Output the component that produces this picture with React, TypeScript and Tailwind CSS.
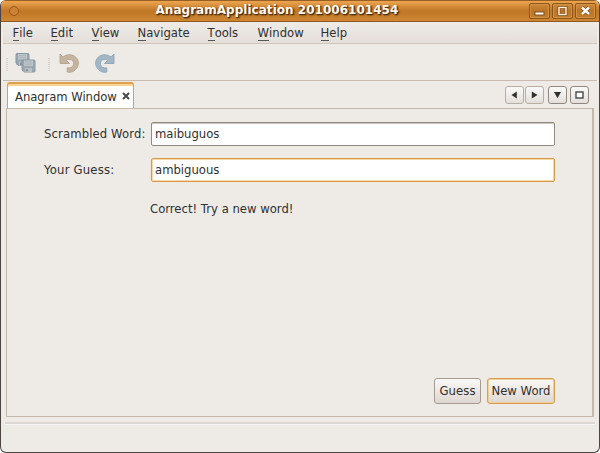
import React from "react";

const menus: { label: string; width: string }[] = [
  { label: "File", width: "w-[38px]" },
  { label: "Edit", width: "w-[41px]" },
  { label: "View", width: "w-[46px]" },
  { label: "Navigate", width: "w-[70px]" },
  { label: "Tools", width: "w-[50px]" },
  { label: "Window", width: "w-[63px]" },
  { label: "Help", width: "w-[40px]" },
];

function TitleButton({ children }: { children: React.ReactNode }) {
  return (
    <button className="flex h-4 w-[21px] items-center justify-center rounded-[2px] border border-[#8d5717] bg-linear-to-b from-[#d18a38] via-[#b97428] to-[#c47e2b] shadow-[inset_0_0_0_1px_#d0924a]">
      {children}
    </button>
  );
}

function TitleBar() {
  return (
    <header className="relative flex h-[22px] shrink-0 items-center justify-between border-t border-b border-t-[#965f24] border-b-[#8e5920] bg-linear-to-b from-[#e9a14c] from-5% via-[#bf7725] via-50% to-[#cf8733] pr-[3px] pl-[8px]">
      <span className="h-[10px] w-[10px] rounded-full border border-[#945b1e] bg-[#d08031]" />
      <div className="flex gap-[2px]">
        <TitleButton>
          <svg width="13" height="12" viewBox="0 0 13 12">
            <path d="M1.5 6.5h10v4h-10z" fill="#855119" />
            <path d="M2.5 7.5h8v2h-8z" fill="#fff" />
          </svg>
        </TitleButton>
        <TitleButton>
          <svg width="13" height="12" viewBox="0 0 13 12">
            <rect x="3" y="2.5" width="7" height="7" fill="none" stroke="#855119" strokeWidth="3" />
            <rect x="3" y="2.5" width="7" height="7" fill="none" stroke="#fff2df" strokeWidth="1.4" />
          </svg>
        </TitleButton>
        <TitleButton>
          <svg width="13" height="12" viewBox="0 0 13 12">
            <path d="M3 2.5l7 6.5m0-6.5l-7 6.5" stroke="#855119" strokeWidth="4" />
            <path d="M3 2.5l7 6.5m0-6.5l-7 6.5" stroke="#fff" strokeWidth="2.4" />
          </svg>
        </TitleButton>
      </div>
      <h1 className="absolute top-[1px] left-[154.5px] text-[12px] leading-[17px] font-bold tracking-[0.03px] whitespace-nowrap text-[#fff8ee] [text-shadow:1px_1px_1px_#4b2b08,1px_1px_2px_#4b2b08]">
        AnagramApplication 201006101454
      </h1>
    </header>
  );
}

function Grip() {
  return (
    <svg width="2" height="14" viewBox="0 0 2 14" className="mt-1">
      <path d="M1 0v14" stroke="#bdb6ae" strokeWidth="1" strokeDasharray="1 1" />
    </svg>
  );
}

function Disk() {
  return (
    <>
      <path
        d="M1.5.5h11q1 0 1 1v10q0 1-1 1H3L.5 10.500V1.500q0-1 1-1z"
        fill="#9aa7b0"
        stroke="#8998a3"
      />
      <path d="M2.500 1h9v5.500h-9z" fill="#bfc6ca" />
      <path d="M3.500 2.700h7M3.500 4.700h7" stroke="#a3adb4" strokeWidth=".8" />
      <path d="M3.500 8.500h7v4h-7z" fill="#b9c1c5" />
      <path d="M4.500 9.500h2v2.500h-2z" fill="#8596a2" />
    </>
  );
}

function SaveAllIcon() {
  return (
    <svg width="22" height="22" viewBox="0 0 22 22">
      <g transform="translate(.5 1)">
        <Disk />
      </g>
      <g transform="translate(6.500 7.500)">
        <Disk />
      </g>
    </svg>
  );
}

const arrowPath =
  "M1 1L4 4C7 1.500 12 1 15.500 3.200C19.500 5.700 20.500 10.500 18.200 14.500C16 18.200 12 20 8.200 19V14.800C11.200 15.500 13.700 14.100 14.500 11.800C15.200 8.800 13.500 6.800 11.200 6.500C9.800 6.300 8.500 6.600 7.500 7.500L10.500 10.500H1Z";

function UndoIcon() {
  return (
    <svg width="21" height="21" viewBox="0 0 21 21">
      <path d={arrowPath} fill="#c5b49e" stroke="#b8a794" />
    </svg>
  );
}

function RedoIcon() {
  return (
    <svg width="21" height="21" viewBox="0 0 21 21" className="-scale-x-100">
      <path d={arrowPath} fill="#a2b6c4" stroke="#93abbb" />
    </svg>
  );
}

function NavButton({ d, strong, box }: { d?: string; strong?: boolean; box?: boolean }) {
  return (
    <button
      className={`flex h-[18px] w-[19px] items-center justify-center rounded-[3px] border bg-linear-to-b from-[#faf9f8] to-[#e4dfda] ${
        strong ? "border-[#8f8880]" : "border-[#b9aea5]"
      }`}
    >
      <svg width="9" height="8" viewBox="0 0 9 8">
        {box ? (
          <rect x="1" y="1" width="7" height="6" fill="#fff" stroke="#3b3b3b" strokeWidth="1.3" />
        ) : (
          <path d={d} fill="#303030" />
        )}
      </svg>
    </button>
  );
}

export default function App() {
  return (
    <div className="h-[453px] w-[600px] bg-white font-['DejaVu_Sans',sans-serif] text-[11.65px] leading-[14px] text-[#303030]">
      <div className="flex h-full flex-col overflow-hidden rounded-[6px] border border-t-0 border-[#4b4440] bg-[#eeebe6]">
        <TitleBar />

        <nav className="mx-[2px] flex h-[22px] shrink-0 items-start border-b border-[#cfc5bb] bg-linear-to-b from-[#eeebe8] to-[#e5dfda] pt-[4px] pl-[9.5px]">
          {menus.map((m) => (
            <div key={m.label} className={`shrink-0 ${m.width}`}>
              <span className="inline-block h-[15px] border-b border-[#555]">{m.label[0]}</span>
              {m.label.slice(1)}
            </div>
          ))}
        </nav>

        <div className="mx-[2px] flex h-[37px] shrink-0 items-center border-b border-[#c9bbb1] pt-[2px] pl-[3px]">
          <Grip />
          <div className="ml-[7px]"><SaveAllIcon /></div>
          <div className="ml-[11px]"><Grip /></div>
          <div className="ml-[9px]"><UndoIcon /></div>
          <div className="ml-[14px]"><RedoIcon /></div>
        </div>

        <div className="mx-[6px] flex h-[27px] shrink-0 items-end justify-between">
          <div className="flex h-[26px] w-[127px] items-center rounded-t-[3px] border border-t-2 border-b-0 border-[#dda04e] bg-white pl-[7px] shadow-[inset_0_2px_0_#fbd491]">
            <span className="pt-[2px] tracking-[-0.07px]">Anagram Window</span>
            <svg width="8" height="8" viewBox="0 0 8 8" className="ml-[5px]">
              <path d="M1 1l6 6m0-6L1 7" stroke="#454545" strokeWidth="1.9" />
            </svg>
          </div>
          <div className="mr-[4px] flex h-[22px] items-start">
            <NavButton d="M6.8.5v7L1.5 4z" />
            <div className="ml-px"><NavButton d="M1.8.5v7L7.5 4z" /></div>
            <div className="ml-[4px]"><NavButton strong d="M1 1h7L4.5 7.2z" /></div>
            <div className="ml-[3px]"><NavButton strong box /></div>
          </div>
        </div>

        <main className="mx-[5px] flex h-[309px] shrink-0 flex-col border border-r-2 border-[#c5b9ad] pt-[13px] pr-[37px] pl-[37px]">
          <label className="flex h-6 items-center">
            <span className="w-[107px] shrink-0 tracking-[0.12px]">Scrambled Word:</span>
            <input
              readOnly
              value="maibuguos"
              className="h-6 w-[404px] shrink-0 rounded-[2px] border border-[#918a80] bg-white px-[3px] pb-[1px] shadow-[inset_0_1px_0_#ccc7c1] outline-none"
            />
          </label>
          <label className="mt-[12px] flex h-6 items-center">
            <span className="w-[107px] shrink-0 tracking-[0.2px]">Your Guess:</span>
            <input
              readOnly
              value="ambiguous"
              className="h-6 w-[404px] shrink-0 rounded-[2px] border border-[#d79a4b] bg-white px-[3px] pb-[1px] shadow-[inset_0_0_0_1px_#f8d9a6] outline-none"
            />
          </label>
          <p className="mt-[20px] ml-[106px]">Correct! Try a new word!</p>
          <div className="mt-auto mb-[12px] flex gap-[6px] self-end">
            <button className="h-[26px] w-[47px] rounded-[3px] border border-[#a59b92] bg-linear-to-b from-[#faf9f8] to-[#ded7d0] tracking-[0.1px]">
              Guess
            </button>
            <button className="h-[26px] w-[68px] rounded-[3px] border border-[#d89d50] bg-linear-to-b from-[#faf9f8] to-[#ded7d0] whitespace-nowrap shadow-[inset_0_0_0_1px_#f3cf98]">
              New Word
            </button>
          </div>
        </main>
        <footer className="mx-[4px] mt-[5px] h-[29px] shrink-0 border-t-2 border-[#dcd7d1] shadow-[inset_0_1px_0_#f7f5f3]" />
      </div>
    </div>
  );
}
